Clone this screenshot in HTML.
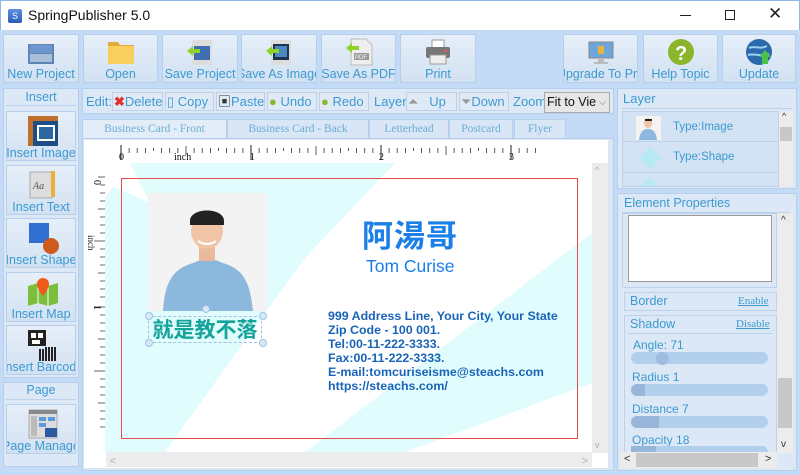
<!DOCTYPE html>
<html><head><meta charset="utf-8"><style>
*{box-sizing:border-box;margin:0;padding:0}
body{width:800px;height:475px;overflow:hidden;background:#c3dbf6;font-family:"Liberation Sans","Noto Sans CJK TC",sans-serif;position:relative;font-size:12px;color:#3b9ad0}
.abs{position:absolute}
.title{left:0;top:0;width:800px;height:30px;background:#fff;border:1px solid #8fb8e8;border-bottom:none}
.btn{position:absolute;top:34px;height:49px;background:linear-gradient(#e6eff9,#d2e1f2);border:1px solid #b6cfea;text-align:center;font-size:12.5px;color:#3b9ad0;white-space:nowrap;overflow:hidden}
.btn span{position:absolute;left:-6px;right:-6px;top:32px}
.btn .ic{position:absolute;left:50%;top:3px;width:28px;height:28px;margin-left:-14px}
.panel{background:#dce8f6;border:1px solid #b6cfea}
.lbtn{position:absolute;left:6px;width:70px;height:50px;background:linear-gradient(#e6eff9,#d2e1f2);border:1px solid #b6cfea;text-align:center;white-space:nowrap;overflow:hidden;font-size:12.5px}
.lbtn span{position:absolute;left:-5px;right:-5px;top:34px}
.lbtn .ic{position:absolute;left:20px;top:3px;width:32px;height:32px}
.eb{position:absolute;top:92px;height:19px;border:1px solid #bcd2ea;background:#e0eaf6;font-size:13px;line-height:17px;padding:0 1px;white-space:nowrap;overflow:hidden}
.tab{position:absolute;top:119px;height:19px;background:#d8e6f5;border:1px solid #b6cfea;border-bottom:none;font-family:"Liberation Serif",serif;font-size:11.5px;color:#6aaed4;text-align:center;line-height:18px}
.slider{position:absolute;left:631px;width:137px;height:12px;border-radius:6px;background:#b3cfee}
</style></head><body>
<div class="abs title">
 <div class="abs" style="left:7px;top:8px;width:14px;height:14px;background:linear-gradient(#5b8fde,#2a5db8);border-radius:2px;color:#fff;font-size:9px;text-align:center;line-height:14px">S</div>
 <div class="abs" style="left:27px;top:6px;font-size:14px;color:#111">SpringPublisher 5.0</div>
 <div class="abs" style="left:679px;top:14px;width:11px;height:1px;background:#222"></div>
 <div class="abs" style="left:724px;top:9px;width:10px;height:10px;border:1px solid #222"></div>
 <div class="abs" style="left:767px;top:3px;font-size:17px;color:#222">✕</div>
</div>

<div class="btn" style="left:3px;width:76px"><svg class="ic" viewBox="0 0 28 28"><rect x="1" y="3" width="26" height="23" fill="#5f84b8"/><rect x="1" y="3" width="26" height="3" fill="#eee"/><rect x="3" y="7" width="22" height="8" fill="#6e97cf"/><rect x="3" y="16" width="22" height="8" fill="#a9bfd9"/></svg><span>New Project</span></div>
<div class="btn" style="left:83px;width:75px"><svg class="ic" viewBox="0 0 28 28"><path d="M1 4h10l2 3h14v19H1z" fill="#e3a93a"/><rect x="1" y="8" width="26" height="18" fill="#f8cf5c"/></svg><span>Open</span></div>
<div class="btn" style="left:162px;width:76px"><svg class="ic" viewBox="0 0 28 28"><rect x="6" y="2" width="20" height="25" fill="#ddd"/><rect x="8" y="8" width="16" height="14" fill="#3f6fb0"/><path d="M1 13l6-5v3h7v4H7v3z" fill="#8fd22a"/></svg><span>Save Project</span></div>
<div class="btn" style="left:241px;width:76px"><svg class="ic" viewBox="0 0 28 28"><rect x="6" y="2" width="20" height="25" fill="#ddd"/><rect x="8" y="6" width="16" height="16" fill="#1b3550"/><rect x="10" y="8" width="12" height="11" fill="#4c88c0"/><path d="M1 13l6-5v3h7v4H7v3z" fill="#8fd22a"/></svg><span>Save As Image</span></div>
<div class="btn" style="left:321px;width:75px"><svg class="ic" viewBox="0 0 28 28"><path d="M6 1h15l6 6v20H6z" fill="#eee" stroke="#bbb"/><rect x="9" y="15" width="15" height="7" fill="#999"/><text x="10" y="21" font-size="6" fill="#fff">PDF</text><path d="M1 10l6-5v3h7v4H7v3z" fill="#8fd22a"/></svg><span>Save As PDF</span></div>
<div class="btn" style="left:400px;width:76px"><svg class="ic" viewBox="0 0 28 28"><rect x="8" y="2" width="12" height="8" fill="#fff" stroke="#999"/><rect x="2" y="9" width="24" height="11" rx="2" fill="#777"/><rect x="6" y="17" width="16" height="9" fill="#eee" stroke="#999"/><rect x="20" y="12" width="3" height="2" fill="#e55"/></svg><span>Print</span></div>
<div class="btn" style="left:563px;width:75px"><svg class="ic" viewBox="0 0 28 28"><rect x="2" y="4" width="24" height="16" fill="#6fa6d9" stroke="#888"/><rect x="11" y="20" width="6" height="4" fill="#bbb"/><rect x="7" y="24" width="14" height="2" fill="#bbb"/><rect x="11" y="8" width="6" height="8" fill="#e6b43c"/></svg><span style="left:-10px;right:-10px">Upgrade To Pro</span></div>
<div class="btn" style="left:643px;width:75px"><svg class="ic" viewBox="0 0 28 28"><circle cx="14" cy="14" r="13" fill="#8bb52a"/><text x="8" y="22" font-size="20" font-weight="bold" fill="#fff" font-family="Liberation Sans">?</text></svg><span>Help Topic</span></div>
<div class="btn" style="left:722px;width:74px"><svg class="ic" viewBox="0 0 28 28"><circle cx="14" cy="14" r="13" fill="#2a6aaa"/><path d="M4 10c5-3 10 2 18-2M3 17c7-2 12 2 21-1" stroke="#9cd0f0" stroke-width="2" fill="none"/><path d="M20 12l6 7h-3v7h-6v-7h-3z" fill="#4cc24c"/></svg><span>Update</span></div>

<div class="abs panel" style="left:3px;top:88px;width:76px;height:290px"></div>
<div class="abs" style="left:6px;top:90px;width:70px;height:16px;text-align:center;border-bottom:1px solid #bcd2ea;font-size:12.5px">Insert</div>
<div class="lbtn" style="top:111px"><svg class="ic" viewBox="0 0 32 32"><rect x="1" y="1" width="30" height="30" fill="#1d4d86"/><rect x="1" y="1" width="30" height="5" fill="#c2712c"/><rect x="1" y="1" width="5" height="30" fill="#c2712c"/><rect x="10" y="10" width="18" height="16" fill="#fff"/><rect x="12" y="12" width="14" height="12" fill="#2c67a0"/></svg><span>Insert Image</span></div>
<div class="lbtn" style="top:165px"><svg class="ic" viewBox="0 0 32 32"><rect x="3" y="3" width="22" height="26" fill="#ddd" stroke="#aaa"/><text x="6" y="20" font-size="10" font-style="italic" fill="#555" font-family="Liberation Serif">Aa</text><rect x="24" y="2" width="4" height="26" fill="#e8b23a"/></svg><span>Insert Text</span></div>
<div class="lbtn" style="top:218px"><svg class="ic" viewBox="0 0 32 32"><rect x="2" y="1" width="20" height="20" fill="#2f6fd0"/><circle cx="24" cy="24" r="8" fill="#cf5a1c"/></svg><span>Insert Shape</span></div>
<div class="lbtn" style="top:272px"><svg class="ic" viewBox="0 0 32 32"><path d="M1 10l10-3 10 3 10-3v20l-10 3-10-3-10 3z" fill="#7bbf3c"/><path d="M11 7v20M21 10v20" stroke="#fff"/><path d="M16 2a6 6 0 0 1 6 6c0 5-6 12-6 12s-6-7-6-12a6 6 0 0 1 6-6z" fill="#ee5a1a"/></svg><span>Insert Map</span></div>
<div class="lbtn" style="top:325px"><svg class="ic" viewBox="0 0 32 32"><rect x="1" y="1" width="18" height="16" fill="#222"/><rect x="4" y="4" width="5" height="5" fill="#fff"/><rect x="11" y="4" width="5" height="5" fill="#fff"/><rect x="5" y="11" width="8" height="4" fill="#fff"/><path d="M13 20v12M16 20v12M19 18v14M22 18v14M25 18v14M28 18v14" stroke="#222" stroke-width="2"/></svg><span>Insert Barcode</span></div>
<div class="abs panel" style="left:3px;top:382px;width:76px;height:85px"></div>
<div class="abs" style="left:6px;top:383px;width:70px;height:17px;text-align:center;border-bottom:1px solid #bcd2ea;font-size:12.5px">Page</div>
<div class="lbtn" style="top:404px"><svg class="ic" viewBox="0 0 32 32"><rect x="2" y="2" width="28" height="28" fill="#ddd" stroke="#aaa"/><rect x="2" y="2" width="28" height="4" fill="#888"/><rect x="4" y="8" width="6" height="20" fill="#bbb"/><rect x="12" y="9" width="7" height="4" fill="#5a9be0"/><rect x="21" y="9" width="7" height="4" fill="#5a9be0"/><rect x="12" y="15" width="7" height="4" fill="#5a9be0"/><rect x="18" y="20" width="12" height="9" fill="#2b5aa0"/></svg><span>Page Manager</span></div>

<div class="abs panel" style="left:82px;top:88px;width:532px;height:26px"></div>
<div class="abs" style="left:86px;top:94px;font-size:13px">Edit:</div>
<div class="eb" style="left:112px;width:51px"><span style="color:#e03030;font-weight:bold">✖</span>Delete</div>
<div class="eb" style="left:165px;width:49px">▯ Copy</div>
<div class="eb" style="left:216px;width:49px"><span style="color:#333">▣</span>Paste</div>
<div class="eb" style="left:267px;width:50px"><span style="color:#8bb52a">●</span> Undo</div>
<div class="eb" style="left:319px;width:50px"><span style="color:#8bb52a">●</span> Redo</div>
<div class="abs" style="left:374px;top:94px;font-size:13px">Layer:</div>
<div class="eb" style="left:406px;width:51px"><span style="color:#999">⏶</span> &nbsp; Up</div>
<div class="eb" style="left:459px;width:50px"><span style="color:#999">⏷</span>Down</div>
<div class="abs" style="left:513px;top:94px;font-size:13px">Zoom:</div>
<div class="abs" style="left:544px;top:92px;width:66px;height:21px;background:#e6e6e6;border:1px solid #aaa;color:#111;font-size:12.5px;line-height:19px;padding-left:2px;overflow:hidden;white-space:nowrap">Fit to Vie<span style="position:absolute;right:3px;color:#666;font-size:9px">⌵</span></div>

<div class="tab" style="left:82px;width:145px;background:#e3edf8;height:20px">Business Card - Front</div>
<div class="tab" style="left:227px;width:142px">Business Card - Back</div>
<div class="tab" style="left:369px;width:80px">Letterhead</div>
<div class="tab" style="left:449px;width:64px">Postcard</div>
<div class="tab" style="left:514px;width:52px">Flyer</div>

<div class="abs" style="left:82px;top:138px;width:532px;height:333px;background:#dbe7f5;border:1px solid #b6cfea"></div>
<div class="abs" style="left:84px;top:140px;width:524px;height:328px;background:#fff"></div>
<svg class="abs" style="left:84px;top:140px" width="524" height="328">
 <g stroke="#222" stroke-width="1">
  <path d="M37 5v15M167 5v15M297 5v15M427 5v15"/>
 </g>
 <g stroke="#333" stroke-width="0.8">
 <path d="M45.1 8v5M53.2 8v5M61.4 8v5M69.5 8v3M77.6 8v5M85.7 8v5M93.9 8v5M102 6v9M110.1 8v5M118.2 8v5M126.4 8v5M134.5 8v3M142.6 8v5M150.7 8v5M158.9 8v5M175.1 8v5M183.2 8v5M191.4 8v5M199.5 8v3M207.6 8v5M215.7 8v5M223.9 8v5M232 6v9M240.1 8v5M248.2 8v5M256.4 8v5M264.5 8v3M272.6 8v5M280.7 8v5M288.9 8v5M305.1 8v5M313.2 8v5M321.4 8v5M329.5 8v3M337.6 8v5M345.7 8v5M353.9 8v5M362 6v9M370.1 8v5M378.2 8v5M386.4 8v5M394.5 8v3M402.6 8v5M410.7 8v5M418.9 8v5M435.1 8v5M443.2 8v5M451.4 8v5"/>
 <path d="M14 37h8M16 45h6M16 53h6M16 61h6M14 69h8M16 77h6M16 85h6M16 93h6M10 101h12M16 109h6M16 117h6M16 125h6M14 133h8M16 141h6M16 149h6M16 157h6M10 167h12M16 175h6M16 183h6M16 191h6M14 199h8M16 207h6M16 215h6M16 223h6M10 231h12M16 239h6M16 247h6M16 255h6M14 263h8M16 271h6M16 279h6M16 287h6"/>
 </g>
 <text x="35" y="20" font-size="10" font-family="Liberation Serif" fill="#111">0</text>
 <text x="90" y="20" font-size="10" font-family="Liberation Serif" fill="#111">inch</text>
 <text x="166" y="20" font-size="10" font-family="Liberation Serif" fill="#111">1</text>
 <text x="295" y="20" font-size="10" font-family="Liberation Serif" fill="#111">2</text>
 <text x="425" y="20" font-size="10" font-family="Liberation Serif" fill="#111">3</text>
 <text x="10" y="40" font-size="10" font-family="Liberation Serif" fill="#111" transform="rotate(90 10 40)">0</text>
 <text x="4" y="95" font-size="9" font-family="Liberation Serif" fill="#111" transform="rotate(90 4 95)">inch</text>
 <text x="10" y="165" font-size="10" font-family="Liberation Serif" fill="#111" transform="rotate(90 10 165)">1</text>
 <g transform="translate(21,23)">
  <rect width="487" height="289" fill="#fff"/>
  <polygon points="25,0 290,0 200,95 60,289 0,289 0,35" fill="#e1fcfd"/>
  <polygon points="0,0 25,0 45,40 0,20" fill="#fff"/>
  <polygon points="200,289 487,70 487,220 300,289" fill="#e1fcfd"/>
 </g>
 <rect x="37.5" y="38.5" width="456" height="260" fill="none" stroke="#e84a4a"/>
 <rect x="22" y="312" width="486" height="15" fill="#ececec"/>
 <text x="26" y="324" font-size="10" fill="#aaa">&lt;</text>
 <text x="498" y="324" font-size="10" fill="#aaa">&gt;</text>
 <rect x="508" y="23" width="16" height="290" fill="#ececec"/>
 <text x="511" y="33" font-size="9" fill="#aaa">^</text>
 <text x="511" y="308" font-size="9" fill="#aaa">v</text>
</svg>

<svg class="abs" style="left:148px;top:193px" width="119" height="120" viewBox="0 0 119 120">
 <rect width="119" height="118" fill="#f3f3f3"/>
 <path d="M15 118c2-30 10-42 30-48l15-6 15 6c20 6 27 18 30 48z" fill="#8cb8de"/>
 <rect x="51" y="50" width="16" height="18" fill="#e8b99a"/>
 <ellipse cx="59" cy="38" rx="16" ry="18" fill="#f1c4a5"/>
 <path d="M42 28c0-14 34-14 34 0v4H42z" fill="#222"/>
 <path d="M50 48q9 6 18 0" stroke="#fff" stroke-width="2" fill="none"/>
</svg>
<div class="abs" style="left:148px;top:316px;width:114px;height:27px;border:1px dashed #9fc3e6;font-family:'Noto Sans CJK TC',sans-serif;font-size:21px;line-height:25px;color:#16a39a;text-align:center;font-weight:bold">就是教不落</div>
<div class="abs" style="left:145px;top:312px;width:8px;height:8px;border-radius:50%;background:#d8e8f7;border:1px solid #9fc3e6"></div>
<div class="abs" style="left:259px;top:312px;width:8px;height:8px;border-radius:50%;background:#d8e8f7;border:1px solid #9fc3e6"></div>
<div class="abs" style="left:145px;top:339px;width:8px;height:8px;border-radius:50%;background:#d8e8f7;border:1px solid #9fc3e6"></div>
<div class="abs" style="left:259px;top:339px;width:8px;height:8px;border-radius:50%;background:#d8e8f7;border:1px solid #9fc3e6"></div>
<div class="abs" style="left:202px;top:305px;width:8px;height:8px;border-radius:50%;background:#d8e8f7;border:1px solid #9fc3e6"></div>

<div class="abs" style="left:362px;top:211px;font-family:'Noto Sans CJK TC',sans-serif;font-size:31px;color:#1a7fe6;letter-spacing:1px;font-weight:bold">阿湯哥</div>
<div class="abs" style="left:366px;top:256px;font-size:17.5px;color:#1a7fe6">Tom Curise</div>
<div class="abs" style="left:328px;top:309px;font-size:12.4px;line-height:14px;color:#1a64b8;font-weight:bold;white-space:nowrap">999 Address Line, Your City, Your State<br>Zip Code - 100 001.<br>Tel:00-11-222-3333.<br>Fax:00-11-222-3333.<br>E-mail:tomcuriseisme@steachs.com<br>https://steachs.com/</div>

<div class="abs panel" style="left:617px;top:88px;width:180px;height:101px"></div>
<div class="abs" style="left:623px;top:91px;font-size:13px">Layer</div>
<div class="abs" style="left:622px;top:108px;width:170px;height:1px;background:#bcd2ea"></div>
<div class="abs" style="left:622px;top:111px;width:157px;height:76px;background:#d4e3f4;border:1px solid #bcd2ea;overflow:hidden">
 <div class="abs" style="left:0;top:0;width:157px;height:30px;border-bottom:1px solid #bcd2ea"></div>
 <svg class="abs" style="left:13px;top:4px" width="25" height="24"><rect width="25" height="24" fill="#f3f3f3"/><ellipse cx="12" cy="7" rx="4" ry="5" fill="#f1c4a5"/><path d="M9 3h7v2H9z" fill="#222"/><path d="M3 24c1-8 4-11 9-11s8 3 9 11z" fill="#8cb8de"/></svg>
 <div class="abs" style="left:50px;top:9px;font-size:11.5px">Type:Image</div>
 <div class="abs" style="left:0;top:31px;width:157px;height:30px;border-bottom:1px solid #bcd2ea"></div>
 <div class="abs" style="left:19px;top:38px;width:16px;height:16px;background:#b9e9f5;transform:rotate(45deg)"></div>
 <div class="abs" style="left:50px;top:39px;font-size:11.5px">Type:Shape</div>
 <div class="abs" style="left:19px;top:68px;width:16px;height:16px;background:#b9e9f5;transform:rotate(45deg)"></div>
</div>
<div class="abs" style="left:779px;top:111px;width:14px;height:76px;background:#ececec"><div class="abs" style="left:1px;top:16px;width:12px;height:14px;background:#c8c8c8"></div><div class="abs" style="left:3px;top:0;font-size:9px;color:#333">^</div></div>

<div class="abs panel" style="left:617px;top:193px;width:180px;height:278px"></div>
<div class="abs" style="left:624px;top:196px;font-size:12.5px">Element Properties</div>
<div class="abs" style="left:622px;top:212px;width:168px;height:1px;background:#bcd2ea"></div>
<div class="abs" style="left:622px;top:213px;width:155px;height:75px;border:1px solid #bcd2ea"></div>
<div class="abs" style="left:628px;top:215px;width:144px;height:67px;background:#fff;border:1px solid #999"></div>
<div class="abs" style="left:624px;top:292px;width:153px;height:19px;border:1px solid #bcd2ea"></div>
<div class="abs" style="left:630px;top:294px;font-size:12.5px">Border</div>
<div class="abs" style="left:738px;top:295px;font-size:11px;font-family:'Liberation Serif',serif;text-decoration:underline">Enable</div>
<div class="abs" style="left:624px;top:315px;width:153px;height:150px;border:1px solid #bcd2ea;border-bottom:none"></div>
<div class="abs" style="left:630px;top:317px;font-size:12.5px">Shadow</div>
<div class="abs" style="left:736px;top:318px;font-size:11px;font-family:'Liberation Serif',serif;text-decoration:underline">Disable</div>
<div class="abs" style="left:628px;top:333px;width:144px;height:1px;background:#bcd2ea"></div>
<div class="abs" style="left:633px;top:338px;font-size:12px">Angle: 71</div>
<div class="slider" style="top:352px"><div class="abs" style="left:25px;top:0;width:13px;height:13px;border-radius:50%;background:#9fbde0"></div></div>
<div class="abs" style="left:632px;top:370px;font-size:12px">Radius 1</div>
<div class="slider" style="top:384px"><div class="abs" style="left:0;top:0;width:14px;height:12px;border-radius:6px 0 0 6px;background:#97b6da"></div></div>
<div class="abs" style="left:632px;top:402px;font-size:12px">Distance 7</div>
<div class="slider" style="top:416px"><div class="abs" style="left:0;top:0;width:28px;height:12px;border-radius:6px 0 0 6px;background:#97b6da"></div></div>
<div class="abs" style="left:632px;top:433px;font-size:12px">Opacity 18</div>
<div class="slider" style="top:446px;height:6px;border-radius:6px 6px 0 0"><div class="abs" style="left:0;top:0;width:25px;height:6px;background:#97b6da"></div></div>
<div class="abs" style="left:777px;top:213px;width:16px;height:240px;background:#ececec"><div class="abs" style="left:1px;top:165px;width:14px;height:50px;background:#c8c8c8"></div><div class="abs" style="left:4px;top:2px;font-size:10px;color:#333">^</div><div class="abs" style="left:4px;top:226px;font-size:10px;color:#333">v</div></div>
<div class="abs" style="left:620px;top:452px;width:157px;height:16px;background:#ececec"><div class="abs" style="left:16px;top:1px;width:122px;height:14px;background:#c8c8c8"></div><div class="abs" style="left:4px;top:1px;font-size:11px;color:#333">&lt;</div><div class="abs" style="left:145px;top:1px;font-size:11px;color:#333">&gt;</div></div>
</body></html>
